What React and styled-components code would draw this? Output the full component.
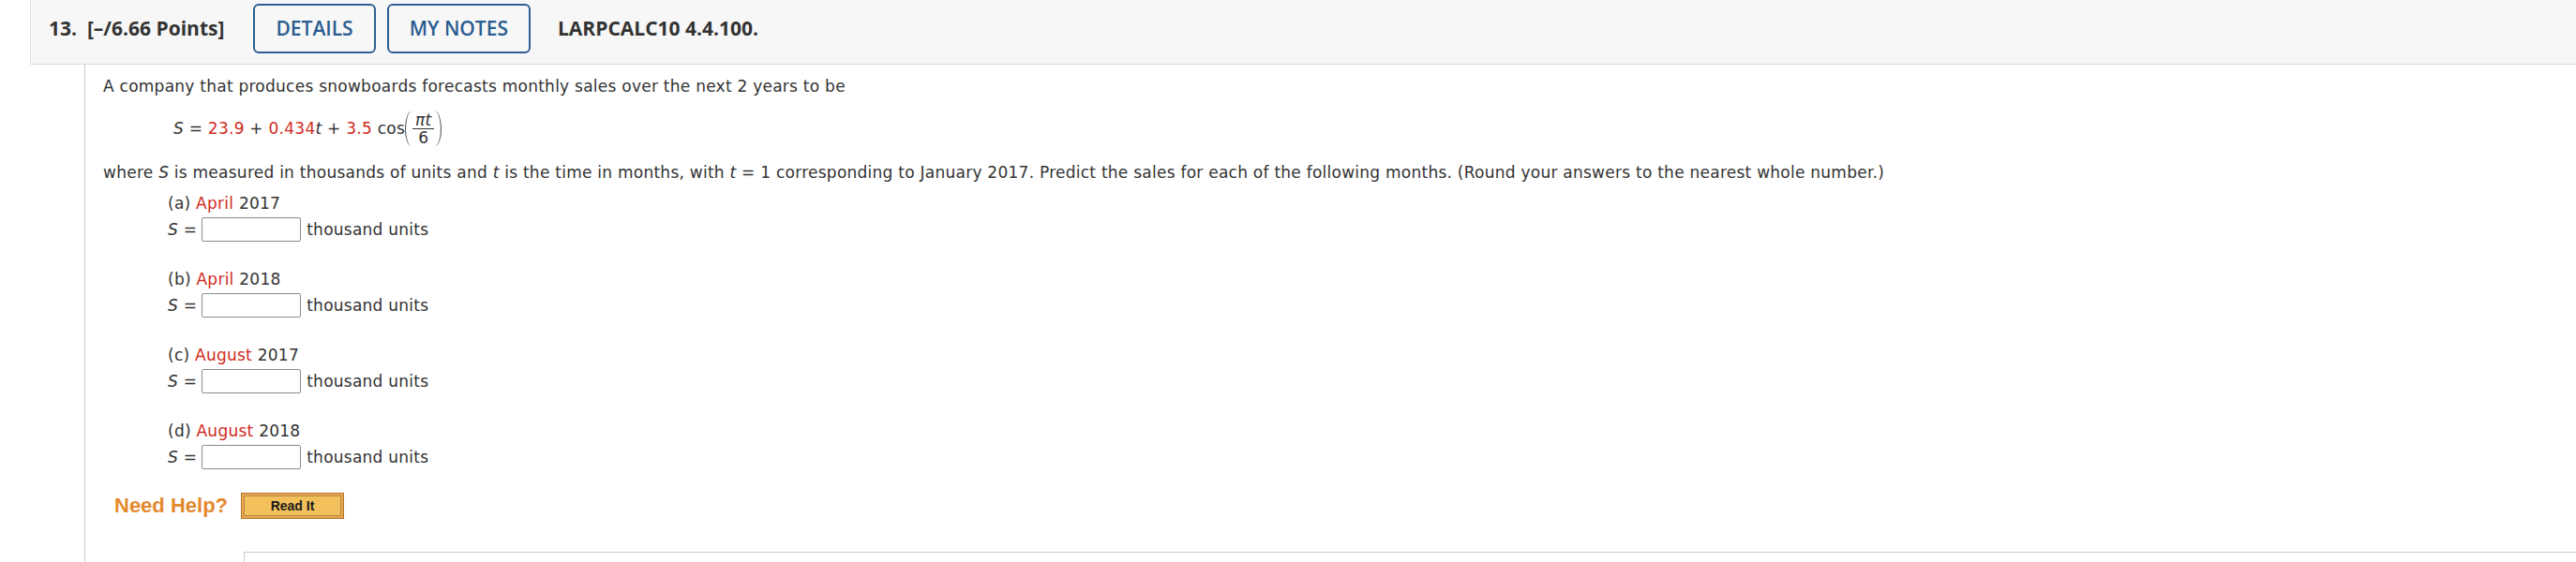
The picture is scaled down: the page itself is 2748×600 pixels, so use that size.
import styled, { createGlobalStyle } from "styled-components";

const GlobalStyle = createGlobalStyle`
body {
    margin: 0;
    background: #ffffff;
    font-family: "DejaVu Sans", Verdana, sans-serif;
    color: #333333;
}
`

const parts = [
    { letter: "a", month: "April", year: "2017" },
    { letter: "b", month: "April", year: "2018" },
    { letter: "c", month: "August", year: "2017" },
    { letter: "d", month: "August", year: "2018" },
];

const App = () => {
    return (
        <>
            <GlobalStyle />
            <Page>
                <Header>
                    <Title>13.&nbsp;&nbsp;[–/6.66 Points]</Title>
                    <NavButton>Details</NavButton>
                    <NavButton $last>My Notes</NavButton>
                    <Source>LARPCALC10 4.4.100.</Source>
                </Header>
                <Body>
                    <Line>A company that produces snowboards forecasts monthly sales over the next 2 years to be</Line>
                    <Formula>
                        <Var>S</Var> = <Red>23.9</Red> + <Red>0.434</Red><Var>t</Var> + <Red>3.5</Red> cos
                        <Delim>
                            <Paren />
                            <Fraction>
                                <Num><Var>πt</Var></Num>
                                <Den>6</Den>
                            </Fraction>
                            <Paren $right />
                        </Delim>
                    </Formula>
                    <Line $top={18}>
                        where <Var>S</Var> is measured in thousands of units and <Var>t</Var> is the time in months, with <Var>t</Var> = 1 corresponding to January 2017. Predict the sales for each of the following months. (Round your answers to the nearest whole number.)
                    </Line>
                    <Parts>
                        {parts.map((part, i) => (
                            <Part key={part.letter} $first={i === 0}>
                                <Line>({part.letter}) <Red>{part.month}</Red> {part.year}</Line>
                                <AnswerRow>
                                    <Var>S</Var>&nbsp;=
                                    <Answer type="text" />
                                    <Unit>thousand units</Unit>
                                </AnswerRow>
                            </Part>
                        ))}
                    </Parts>
                    <HelpRow>
                        <HelpLabel>Need Help?</HelpLabel>
                        <ReadIt>Read It</ReadIt>
                    </HelpRow>
                    <NextBox />
                </Body>
            </Page>
        </>
    )
};

const Page = styled.div`
padding-left: 32px;
`
const Header = styled.div`
display: flex;
align-items: center;
box-sizing: border-box;
height: 69px;
padding: 3px 0 11px 19px;
background: #f7f7f7;
border-left: 1px solid #e4e4e4;
border-bottom: 1px solid #dcdcdc;
font-family: "Open Sans", sans-serif;
`
const Title = styled.div`
font-size: 21px;
font-weight: 700;
color: #333333;
margin-right: 31px;
white-space: nowrap;
`
const NavButton = styled.button`
box-sizing: border-box;
height: 53px;
padding: 0 22px;
margin-right: ${props => props.$last ? "29px" : "12px"};
background: #f7f7f7;
border: 2px solid #2d5e92;
border-radius: 6px;
color: #2b5c90;
font-family: "Open Sans", sans-serif;
font-size: 21px;
font-weight: 600;
text-transform: uppercase;
`
const Source = styled.div`
font-size: 21px;
font-weight: 700;
color: #333333;
`
const Body = styled.div`
margin-left: 58px;
padding: 13px 0 0 19px;
border-left: 1px solid #cccccc;
font-size: 17px;
letter-spacing: 0.25px;
line-height: 20px;
`
const Line = styled.div`
margin-top: ${props => props.$top || 0}px;
white-space: nowrap;
`
const Red = styled.span`
color: #d02b22;
`
const Var = styled.i`
font-style: italic;
`
const Formula = styled.div`
margin: 17px 0 0 75px;
white-space: nowrap;
`
const Delim = styled.span`
display: inline-flex;
align-items: center;
vertical-align: middle;
`
const Paren = styled.span`
box-sizing: border-box;
width: 7px;
height: 37px;
margin: ${props => props.$right ? "0 0 0 1px" : "0 1px 0 0"};
${props => props.$right
    ? "border-right: 1.5px solid #444; border-radius: 0 100% 100% 0 / 0 50% 50% 0;"
    : "border-left: 1.5px solid #444; border-radius: 100% 0 0 100% / 50% 0 0 50%;"}
`
const Fraction = styled.span`
display: inline-flex;
flex-direction: column;
align-items: stretch;
text-align: center;
`
const Num = styled.span`
padding: 0 3px;
line-height: 18px;
border-bottom: 1px solid #333333;
`
const Den = styled.span`
line-height: 18px;
`
const Parts = styled.div`
margin: 13px 0 0 69px;
`
const Part = styled.div`
margin-top: ${props => props.$first ? 0 : 30}px;
`
const AnswerRow = styled.div`
display: flex;
align-items: center;
height: 26px;
margin-top: 5px;
white-space: nowrap;
`
const Answer = styled.input`
box-sizing: border-box;
width: 106px;
height: 26px;
margin: 0 6px 0 5px;
border: 1px solid #8c8c8c;
border-radius: 2px;
background: #ffffff;
`
const Unit = styled.span`
color: #333333;
`
const HelpRow = styled.div`
display: flex;
align-items: center;
gap: 14px;
margin: 25px 0 0 12px;
`
const HelpLabel = styled.span`
font-family: "Liberation Sans", Arial, sans-serif;
font-size: 22px;
font-weight: 700;
letter-spacing: 0;
color: #e3892e;
`
const ReadIt = styled.button`
box-sizing: border-box;
width: 110px;
height: 28px;
padding: 0;
border: 1px solid #b0762e;
background: #f3c15c;
box-shadow: inset 0 0 0 2px #eca64b, inset 0 0 0 3px #b4884a;
font-family: "Liberation Sans", Arial, sans-serif;
font-size: 14px;
font-weight: 700;
color: #1a1a1a;
`
const NextBox = styled.div`
height: 40px;
margin: 35px 0 0 150px;
border-top: 1px solid #cccccc;
border-left: 1px solid #cccccc;
`

export default App;
